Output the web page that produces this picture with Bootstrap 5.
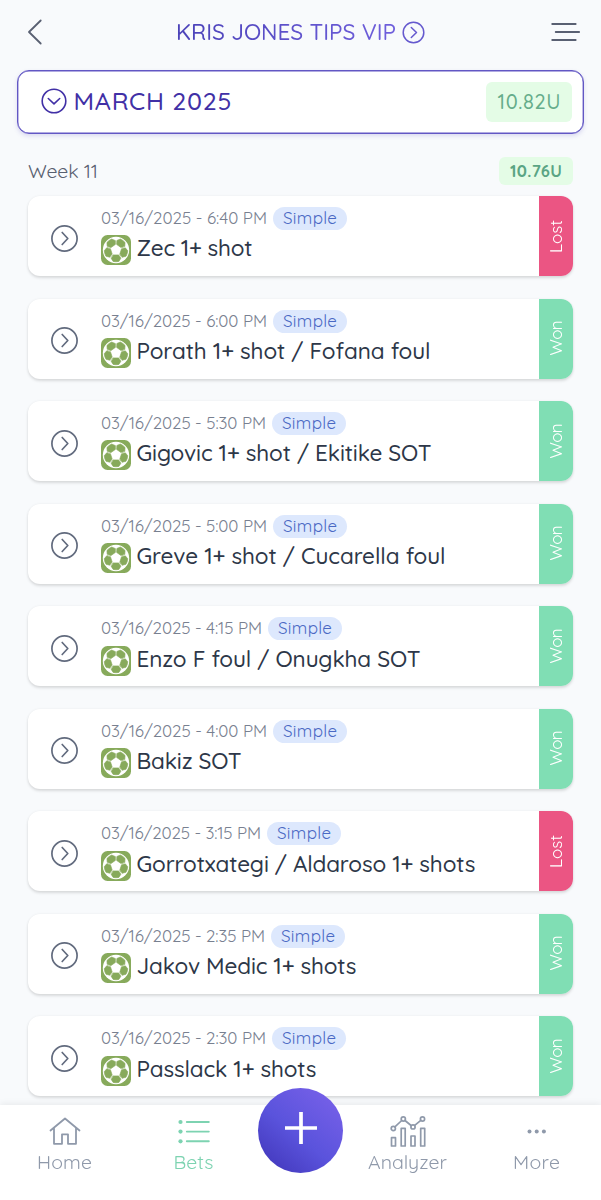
<!DOCTYPE html>
<html lang="en">
<head>
<meta charset="utf-8">
<meta name="viewport" content="width=device-width, initial-scale=1">
<title>Kris Jones Tips VIP</title>
<link rel="stylesheet" href="https://cdn.jsdelivr.net/npm/bootstrap@5.3.0/dist/css/bootstrap.min.css">
<style>
body{font-family:Quicksand,Lato,"Open Sans",sans-serif;background:#f8fafc;color:#2d3748;height:1200px;overflow:hidden}
svg{display:block;flex:none;fill:none;stroke:currentColor;stroke-linecap:round;stroke-linejoin:round}
[data-w]{white-space:nowrap;display:block;flex:none}
.top-bar{height:64px;padding:0 21px 0 27px;color:#596072}
.brand-title{font-size:22.5px;font-weight:500;line-height:30px;background:linear-gradient(90deg,#4b42b8,#6f5fdc);-webkit-background-clip:text;background-clip:text;color:transparent}
.month-box{height:64px;margin:6px 17px 0 16.5px;border:1.5px solid #6257c4;border-radius:12px;background:#fff;box-shadow:0 2px 4px #4b42b82b,inset 0 0 0 .4px #6257c4;color:#4130a6;padding:0 11px 2px 23px}
.month-name{font-size:25px;font-weight:500;line-height:34px;margin:0 0 1px 7px}
.units{background:#e4fce6;color:#66ad8b;border-radius:6px}
.units-lg{width:86px;height:40px;font-size:20px;font-weight:500;margin-top:2px}
.units-sm{width:74px;height:28px;font-size:16.5px;font-weight:700;color:#5aa584}
.week-row{height:28px;margin:23px 28px 11px;color:#586070;font-size:19.5px}
.bets{margin:0 28px;gap:22.55px}
.bet{height:80px;border-radius:12px;background:#fff;box-shadow:0 2px 3px #0000001f,0 0 3px #0000000d;overflow:hidden}
.bet-open{width:73px;color:#626b7e;padding-left:22px;margin-top:4px}
.bet-date{font-size:17px;line-height:22px;color:#788090}
.kind{width:74px;height:23px;border-radius:12px;background:#dde8fd;color:#4a69c4;font-size:17px;line-height:22.5px;margin-left:6px}
.bet-name{font-size:22.5px;font-weight:500;line-height:28px;margin-left:5.500px;margin-top:-4px}
.result{width:34px;color:#fff;font-size:17px}
.result span{writing-mode:vertical-rl;transform:rotate(180deg);line-height:24px}
.won{background:#80deb4}.lost{background:#eb5583}
.tabs{height:95px;background:#fff;box-shadow:0 -2px 6px #0000000f;color:#8f99aa}
.tab{flex:1 1 0;font-size:19.5px;line-height:26px;padding-top:11px}
.tab svg{margin-bottom:2px}
.tab-on{color:#7dd3b1}
.add{width:85px;height:85px;border-radius:50%;margin-top:-17px;background:linear-gradient(40deg,#4339bd 8%,#5a53dc 45%,#7b62ea 98%);color:#fff}
</style>
<script src="https://cdn.jsdelivr.net/npm/bootstrap@5.3.0/dist/js/bootstrap.bundle.min.js"></script>
</head>
<body>
<header class="top-bar d-flex align-items-center justify-content-between">
  <svg width="16" height="26" viewBox="0 0 16 26" stroke-width="1.8"><path d="M13.700 1.500 2 13l11.700 11.500"/></svg>
  <div class="d-flex align-items-center ms-2">
    <div class="brand-title" data-w="220">KRIS JONES TIPS VIP</div>
    <svg style="color:#6559ce;margin-left:6px" width="23" height="23" viewBox="0 0 23 23" stroke-width="1.5"><circle cx="11.500" cy="11.500" r="10.300"/><path d="m9.300 6.500 5.200 5-5.200 5"/></svg>
  </div>
  <svg width="30" height="20" viewBox="0 0 30 20" stroke-width="1.800"><path d="M2.200 2h23.500M5.700 10h23.500M2.200 18h23.500"/></svg>
</header>

<section class="month-box d-flex align-items-center">
  <svg width="26" height="26" viewBox="0 0 26 26" stroke-width="1.6"><circle cx="13" cy="13" r="11.800"/><path d="m7.300 10.500 5.700 5.300 5.700-5.300"/></svg>
  <div class="month-name" data-w="158">MARCH 2025</div>
  <div class="units units-lg d-flex align-items-center justify-content-center ms-auto"><span data-w="63">10.82U</span></div>
</section>

<div class="week-row d-flex align-items-center justify-content-between">
  <div data-w="70">Week 11</div>
  <div class="units units-sm d-flex align-items-center justify-content-center"><span data-w="52">10.76U</span></div>
</div>

<main class="bets d-flex flex-column" id="bets"></main>

<nav class="tabs fixed-bottom d-flex">
  <div class="tab d-flex flex-column align-items-center">
    <svg width="32" height="31" viewBox="0 0 32 31" stroke-width="1.8"><path d="M1.500 14.500 16 2.500l14.500 12M5 12v15.800h8v-9.500h6v9.500h8V12"/></svg><span data-w="55">Home</span>
  </div>
  <div class="tab tab-on d-flex flex-column align-items-center">
    <svg width="34" height="31" viewBox="0 0 34 31" stroke-width="1.900"><path d="M9.800 6h22M9.800 15.600h22M9.800 25.300h22"/><g fill="currentColor" stroke="none"><circle cx="3.500" cy="6" r="2.100"/><circle cx="3.500" cy="15.600" r="2.100"/><circle cx="3.500" cy="25.300" r="2.100"/></g></svg><span data-w="40">Bets</span>
  </div>
  <div class="add d-flex align-items-center justify-content-center">
    <svg width="34" height="34" viewBox="0 0 34 34" stroke-width="3.700" style="margin-top:-6px;stroke-linecap:butt"><path d="M17 1v32M1 17h32"/></svg>
  </div>
  <div class="tab d-flex flex-column align-items-center">
    <svg width="36" height="31" viewBox="0 0 36 31" stroke-width="1.700"><path d="M1.500 21.700h4v8.300h-4zM11.200 12.300h4V30h-4zM21 20h4v10h-4zM30.700 12.300h4V30h-4zM4.900 10.800l6.800-6.300M15 4.500l6.100 5M24.700 9.400l6.100-5"/><circle cx="3.300" cy="12.500" r="2.100"/><circle cx="13.300" cy="3" r="2.100"/><circle cx="23" cy="10.900" r="2.100"/><circle cx="32.500" cy="3" r="2.100"/></svg><span data-w="79">Analyzer</span>
  </div>
  <div class="tab d-flex flex-column align-items-center">
    <svg width="20" height="31" viewBox="0 0 20 31" style="fill:currentColor;stroke:none"><circle cx="2.500" cy="15.600" r="2"/><circle cx="9.700" cy="15.600" r="2"/><circle cx="16.900" cy="15.600" r="2"/></svg><span data-w="47">More</span>
  </div>
</nav>

<svg width="0" height="0" class="position-absolute">
  <symbol id="ball" viewBox="0 0 30 30">
    <rect width="30" height="30" rx="6.500" fill="#87aa5b" stroke="none"/>
    <circle cx="15" cy="15" r="13.200" fill="#fff" stroke="none"/>
    <g fill="#87aa5b" stroke="#87aa5b" stroke-width=".6">
      <path id="patch" d="M12.300 19.900h5.400l2.200 3.300-2 3.200a12 12 0 0 1-5.800 0l-2-3.200z"/>
      <use href="#patch" transform="rotate(72 15 15)"/>
      <use href="#patch" transform="rotate(144 15 15)"/>
      <use href="#patch" transform="rotate(216 15 15)"/>
      <use href="#patch" transform="rotate(288 15 15)"/>
    </g>
  </symbol>
</svg>

<script>
// time, date width, name, name width, result
const bets = [
  ["6:40", 166, "Zec 1+ shot", 116, "Lost"],
  ["6:00", 166, "Porath 1+ shot / Fofana foul", 294, "Won"],
  ["5:30", 165, "Gigovic 1+ shot / Ekitike SOT", 295, "Won"],
  ["5:00", 166, "Greve 1+ shot / Cucarella foul", 309, "Won"],
  ["4:15", 161, "Enzo F foul / Onugkha SOT", 284, "Won"],
  ["4:00", 166, "Bakiz SOT", 105, "Won"],
  ["3:15", 160, "Gorrotxategi / Aldaroso 1+ shots", 339, "Lost"],
  ["2:35", 164, "Jakov Medic 1+ shots", 220, "Won"],
  ["2:30", 165, "Passlack 1+ shots", 180, "Won"]
];
document.getElementById("bets").innerHTML = bets.map(([time, dw, name, nw, res]) => `
  <article class="bet d-flex flex-shrink-0">
    <div class="bet-open d-flex align-items-center">
      <svg width="29" height="29" viewBox="0 0 29 29" stroke-width="1.700"><circle cx="14.500" cy="14.500" r="12.600"/><path d="m12.200 8.500 5.600 6-5.600 6"/></svg>
    </div>
    <div class="flex-grow-1">
      <div class="d-flex" style="margin-top:11px">
        <span class="bet-date" data-w="${dw}">03/16/2025 - ${time} PM</span>
        <span class="kind d-flex justify-content-center"><span data-w="54">Simple</span></span>
      </div>
      <div class="d-flex align-items-center" style="margin-top:5.400px">
        <svg width="30" height="30"><use href="#ball"/></svg>
        <span class="bet-name" data-w="${nw}">${name}</span>
      </div>
    </div>
    <div class="result ${res.toLowerCase()} d-flex align-items-center justify-content-center"><span data-w="${res === "Won" ? 35 : 33}">${res}</span></div>
  </article>`).join("");

// Track each label out or in so it fills its intended measure.
document.querySelectorAll("[data-w]").forEach(el => {
  const range = document.createRange();
  range.selectNodeContents(el);
  const box = range.getBoundingClientRect();
  const upright = getComputedStyle(el).writingMode === "vertical-rl";
  const gap = (el.dataset.w - (upright ? box.height : box.width)) / (el.textContent.length - 1);
  el.style.letterSpacing = gap + "px";
  el.style[upright ? "marginBottom" : "marginRight"] = -gap + "px";
});
</script>
</body>
</html>
